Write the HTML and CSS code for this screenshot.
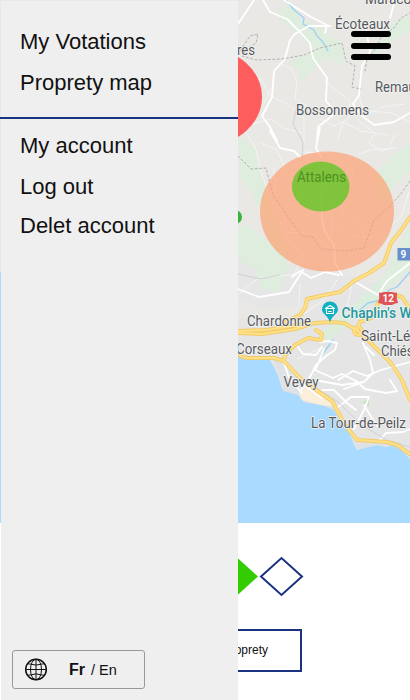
FILE: index.html
```html
<!DOCTYPE html>
<html lang="en">
<head>
<meta charset="utf-8">
<title>Proprety map</title>
<link rel="stylesheet" href="styles.css">
</head>
<body>
<main class="screen">
  <svg class="map" viewBox="0 0 410 523" width="410" height="523" aria-label="Map">
    <rect class="land" width="410" height="523"/>
    <g class="urban">
      <path d="M238 318L290 322L330 300L378 280L410 300V455L385 449L358 448L340 410L310 401L282 389L272 364L238 355Z"/>
      <path d="M238 250L275 262L330 268L370 282L340 300L265 310L238 300Z" opacity=".45"/>
    </g>
    <g class="green">
      <path d="M278 10L293 4L302 20L319 26L334 39L334 53L316 51L300 35L279 20Z"/>
      <path d="M290 61L316 50L326 38L342 40L344 64L323 59L311 72L304 80L299 81L300 68L290 66Z"/>
      <path d="M390 25L405 17L410 20V31L391 41L379 52L370 54L383 36Z"/>
      <path d="M238 137L256 148L258 165L267 188L278 224L290 253L285 267L271 246L266 223L253 196L240 177Z"/>
      <path d="M238 227L247 225L268 241L282 257L291 270L269 276L246 264L238 260Z"/>
      <path d="M253 272L278 266L286 277L278 291L263 289Z"/>
      <path d="M374 175L399 150L410 144V171L396 183L385 205L376 193Z"/>
      <path d="M404 235L410 225V269L391 287L379 300L363 310L335 336L325 344L323 331L348 310L384 275Z"/>
      <path d="M312 378L319 376L320 383L313 385Z"/>
      <path class="park" d="M363 402L369 398V406L364 404Z"/>
    </g>
    <g class="water">
      <path d="M0 272H1V523H0ZM238 354L246 360L270 360L278 375L282 389L298 395L304 402L324 405L334 410L341 423L350 434L354 445L357 450L369 446L378 442L385 445L393 444L402 450L410 459V523H238Z"/>
      <path class="shore" d="M272 358L284 361L299 377L316 389L332 402L345 426L357 440L386 442L410 455V459L402 451L393 446L385 447L378 445L369 447L357 450L354 444L350 434L341 423L334 410L324 406L304 402L298 395L283 391L280 375Z"/>
      <path class="beach" d="M303 378L316 390L330 400L332 406L322 405L302 400L299 393Z"/>
    </g>
    <path class="stream" d="M286 0L294 10L304 18L303 24L314 30L317 36L323 42L328 51M410 272L397 287L389 290L381 300L368 303L355 314M333 340L321 356"/>
    <path class="lane" d="M254 71L246 77L262 80L269 95L287 104L304 118L304 144M239 105L251 101L265 102L271 88M278 64L291 68L297 81L295 99L306 105M253 124L271 119L283 128L302 133M324 80L350 101L349 119L333 126L321 119M359 93L361 104L370 113L382 107L405 104M359 121L375 133L369 143L381 151L397 147M370 111L392 113L410 122M260 143L276 149L286 170L294 184L299 206M245 132L256 149L261 172L270 196L281 223L286 245M302 152L330 153L353 172L350 187M274 167L275 202L284 216L289 241L303 257M338 140L343 122L361 131L389 135M359 154L375 149H389L395 134M334 190L342 199L341 214L354 218L363 229L365 246M304 217L321 208L331 214L332 236M285 232L313 234L330 249M331 224L356 236L379 238L402 215L409 192M239 294L257 279L294 274L305 252M337 280L326 298L307 312L291 319M352 284L347 308M300 284L299 305M297 359L323 347"/>
    <path class="road" d="M238 24L254 0M263 0L270 12L287 19L300 32L310 43L313 58L327 78L326 101L333 109L332 116L318 127L317 140M295 34L309 26L330 26M295 34L290 40L285 59L274 71L272 97L262 116L270 127L277 141M284 0L311 17L327 25L325 33M365 23L370 52L362 66L359 95L353 104L361 115L374 125L394 122L410 113M395 0L390 18M270 131L280 148L294 151L301 158M320 128L316 148L321 157M321 190L322 220L325 232L334 245L335 263L342 275M292 277L300 271L311 278L325 272L339 275M238 289L259 297L289 292L303 270M357 283L378 295L387 281L410 263M298 347L303 354L316 355L322 347M320 342L328 341L337 343L335 350L326 356L316 365L309 379L303 385L301 392M324 349L318 364L315 370L333 378L342 374L356 381L365 389L386 393L397 391L390 380M363 343L370 360L373 373L364 382L344 389M284 363L290 380L302 393M302 384L322 398M338 407L351 397L369 397M322 390L334 390L347 403L356 410M369 397L364 410L354 429M364 405L373 420L378 427M380 440L386 433L403 432L410 429M366 347L374 355M338 380L353 371L367 376L381 370L410 362M320 381L342 385L364 382"/>
    <path class="rail" d="M296 377L318 389L338 402L363 426L387 440L410 447M238 274L260 279L280 275M302 160L303 142L293 124L296 110"/>
    <g class="yellow-edge">
      <path id="main-roads" d="M238 333L262 334L295 329L315 323L330 322L344 323L358 331L378 350L391 363L402 380L410 400M238 331L266 330L292 326L309 323M284 323L300 315L305 308L307 299L320 296L340 292L354 281L369 273L384 263L391 243L402 229L410 217M240 356L247 358L274 358L284 361L299 377L316 390L332 401L345 425L357 440L387 442L397 445L410 454M284 361L285 355L295 345L308 338L321 340L322 334L316 330M357 330L360 322L371 318L378 303L391 294L402 297L410 309"/>
      <circle cx="358" cy="331" r="4"/>
    </g>
    <g class="yellow">
      <use href="#main-roads"/>
      <circle cx="358" cy="331" r="4"/>
    </g>
    <path class="border" d="M238 54L250 36L258 34L256 43L247 49L242 56L256 60L282 59L304 55L320 48L342 43L346 61L355 66L352 87L361 89M365 71L367 59L376 48L382 35L394 28L401 18L410 13M238 156L251 169L266 168L273 195L285 213L302 236L313 237L321 249L345 251L364 248L374 220L388 208L400 195L410 181"/>
    <ellipse class="zone red" cx="207" cy="97" rx="55" ry="48.500"/>
    <ellipse class="zone orange" cx="327" cy="211.500" rx="67" ry="60"/>
    <ellipse class="zone lime" cx="320.700" cy="186.500" rx="28.800" ry="25"/>
    <circle class="zone dark" cx="235" cy="217" r="7"/>
    <g class="label">
      <text x="335" y="28.500" textLength="55" lengthAdjust="spacingAndGlyphs">Écoteaux</text>
      <text x="365" y="4" textLength="54" lengthAdjust="spacingAndGlyphs">Maracon</text>
      <text x="237" y="55" textLength="18" lengthAdjust="spacingAndGlyphs">res</text>
      <text x="375" y="92" textLength="66" lengthAdjust="spacingAndGlyphs">Remaufens</text>
      <text x="296" y="114.500" textLength="73" lengthAdjust="spacingAndGlyphs">Bossonnens</text>
      <text class="covered" x="297" y="182" textLength="49" lengthAdjust="spacingAndGlyphs">Attalens</text>
      <text x="247" y="325.500" textLength="64" lengthAdjust="spacingAndGlyphs">Chardonne</text>
      <text x="236" y="354" textLength="56" lengthAdjust="spacingAndGlyphs">Corseaux</text>
      <text x="283.500" y="387" textLength="35" lengthAdjust="spacingAndGlyphs">Vevey</text>
      <text x="361" y="341" textLength="76" lengthAdjust="spacingAndGlyphs">Saint-Légier-</text>
      <text x="381" y="356" textLength="46" lengthAdjust="spacingAndGlyphs">Chiésaz</text>
      <text x="311" y="427.500" textLength="95" lengthAdjust="spacingAndGlyphs">La Tour-de-Peilz</text>
    </g>
    <text class="place" x="341.500" y="317.500" textLength="94" lengthAdjust="spacingAndGlyphs">Chaplin's World</text>
    <path class="pin" d="M330 322.500C328 315 322 314 322 309.500A8 8 0 0 1 338 309.500C338 314 332 315 330 322.500Z"/>
    <path class="museum" d="M325.500 308.500L330 305.500L334.500 308.500ZM326.500 309.500V313.500H333.500V309.500M328.800 311.500H331.200"/>
    <path class="shield12" d="M379 292.500Q382 293 384 292H392Q394 293 397 292.500Q396 298 398 303Q395 303 392 305H384Q381 303 378 303Q380 298 379 292.500Z"/>
    <text class="route" x="382.500" y="302">12</text>
    <rect class="shield9" x="397.500" y="248" width="14" height="12.500"/>
    <text class="route" x="400.500" y="258">9</text>
  </svg>

  <button class="burger" aria-label="Menu"><span></span><span></span><span></span></button>

  <section class="actions">
    <svg class="rating" width="304" height="42" viewBox="0 0 304 42">
      <path class="full" d="M216 21.500L237 2.500L258 21.500L237 40.500Z"/>
      <path class="empty" d="M261 21.500L281.500 3L302 21.500L281.500 40Z"/>
    </svg>
    <button class="proprety">Add a proprety</button>
  </section>

  <aside class="drawer">
    <nav class="links first">
      <a>My Votations</a>
      <a>Proprety map</a>
    </nav>
    <nav class="links second">
      <a>My account</a>
      <a>Log out</a>
      <a>Delet account</a>
    </nav>
    <button class="language">
      <svg class="globe" width="24" height="24" viewBox="0 0 24 24">
        <circle cx="12" cy="11.500" r="10.300"/>
        <g class="grid"><ellipse cx="12" cy="11.500" rx="5.500" ry="10.300"/>
        <path d="M12 1.200V21.800M1.700 11.500H22.300M4 5.700Q12 8.500 20 5.700M4 17.300Q12 14.500 20 17.300"/></g>
      </svg>
      <span class="names"><b>Fr</b> / En</span>
    </button>
  </aside>
</main>
</body>
</html>
```
FILE: styles.css
```css
* { box-sizing: border-box; }
body { margin: 0; background: #fff; color: #111; font-family: "Liberation Sans", Arial, sans-serif; }
button { margin: 0; padding: 0; background: none; border: 0; font: inherit; color: inherit; }

.screen { position: relative; width: 410px; height: 700px; overflow: hidden; display: flex; flex-direction: column; }

.map { display: block; flex: none; fill: none; stroke-linejoin: round; stroke-linecap: round; }
.land { fill: #e9e8e5; }
.urban { fill: #e5e5e6; }
.green { fill: #dcefdc; opacity: .8; }
.park { fill: #b8e6b0; }
.water { fill: #a9daff; }
.shore { fill: #dfe2e5; }
.beach { fill: #fbeedb; }
.stream { stroke: #9bd0f5; stroke-width: 1.3; }
.lane { stroke: #f4f4f3; stroke-width: 1; }
.road { stroke: #fff; stroke-width: 1.8; }
.rail { stroke: #cfd1d2; stroke-width: 1; }
.yellow-edge { stroke: #f1cb69; stroke-width: 4; }
.yellow { stroke: #ffe086; stroke-width: 2.2; }
.border { stroke: #b1b2b2; stroke-width: 1; stroke-dasharray: 2 2.5; }
.label { fill: #55585d; stroke: #f4f4f3; stroke-width: 1.5; paint-order: stroke; font: 14px Roboto, sans-serif; }
.covered { fill: #4f8f22; stroke: none; }
.place { fill: #24959c; stroke: #f0f6f5; stroke-width: 1.5; paint-order: stroke; font: 500 14px Roboto, sans-serif; }
.pin { fill: #12b0c3; }
.museum { stroke: #fff; stroke-width: 1.1; }
.shield12 { fill: #df5358; }
.shield9 { fill: #688fcc; }
.route { fill: #fff; font: bold 10px Roboto, sans-serif; }
.red { fill: #ff4a4a; fill-opacity: .88; }
.orange { fill: #ff9b6b; fill-opacity: .65; }
.lime { fill: #57c81e; fill-opacity: .75; }
.dark { fill: #28ad28; fill-opacity: .9; }

.burger { position: absolute; top: 31px; right: 19.500px; width: 40px; display: flex; flex-direction: column; gap: 5.500px; }
.burger span { height: 6px; border-radius: 3px; background: #000; }

.actions { display: flex; flex-direction: column; align-items: flex-start; padding-top: 32px; gap: 32px; }
.rating { display: block; }
.full { fill: #33cc00; }
.empty { fill: #fff; stroke: #1b3281; stroke-width: 2; }
.proprety { width: 194px; height: 43px; margin-left: 108px; padding-right: 32px; padding-bottom: 2px; text-align: right; border: 2px solid #1b3281; font-size: 12px; }

.drawer { position: absolute; top: 1px; left: 0; bottom: 0; width: 238px; display: flex; flex-direction: column; background: linear-gradient(#efefef, #efefef) 1px 0 no-repeat; }
.links { display: flex; flex-direction: column; padding-left: 20px; font-size: 22px; line-height: 26px; }
.first { height: 118px; padding-top: 28px; gap: 15px; border-bottom: 2px solid #1b3281; }
.second { padding-top: 14px; gap: 14px; }
.second a:nth-child(2) { padding-top: 1px; margin-bottom: -1px; }
.language { display: flex; align-items: center; width: 133px; height: 39px; margin: auto 0 11px 12px; padding-left: 11px; gap: 21px; border: 1px solid #999; border-radius: 3px; }
.globe { fill: none; stroke: #111; stroke-width: 1.500; }
.grid { stroke-width: 1; }
.names { font-size: 14.500px; white-space: pre; }
.names b { font-size: 16px; margin-right: 2px; }
```
